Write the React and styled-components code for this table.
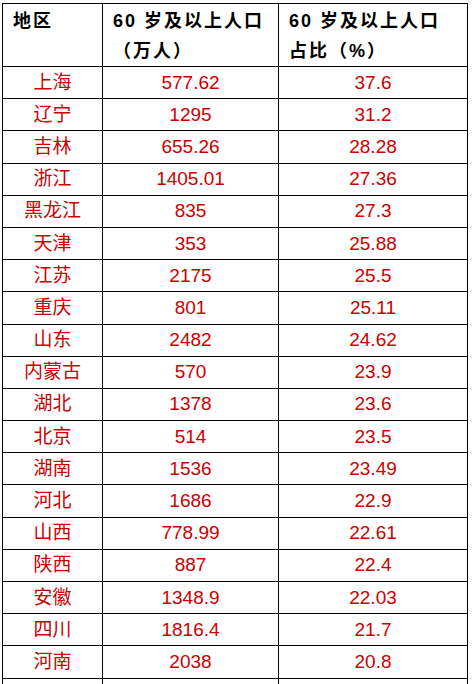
import React from 'react';
import styled, { createGlobalStyle } from 'styled-components';

const GlobalStyle = createGlobalStyle`
  body {
    margin: 0;
    background: #fff;
    font-family: 'Liberation Sans', 'Noto Sans CJK SC', sans-serif;
  }
`;

const Table = styled.table`
  margin: 3px 0 0 2px;
  width: 465px;
  table-layout: fixed;
  border-collapse: collapse;
  font-family: 'Liberation Sans', 'Noto Sans CJK SC', sans-serif;
`;

const HeadCell = styled.th`
  height: 60px;
  padding: 2px 4px 0 10px;
  box-sizing: border-box;
  border: 1px solid #000;
  vertical-align: top;
  text-align: left;
  white-space: nowrap;
  font-size: 18px;
  font-weight: 700;
  line-height: 30px;
  letter-spacing: 2px;
  color: #000;
`;

const Cell = styled.td`
  height: 32.2px;
  padding: 0;
  box-sizing: border-box;
  border: 1px solid #000;
  text-align: center;
  vertical-align: middle;
  white-space: nowrap;
  font-size: 19px;
  line-height: 22px;
  color: #cc0000;
`;

const rows = [
  ['上海', '577.62', '37.6'],
  ['辽宁', '1295', '31.2'],
  ['吉林', '655.26', '28.28'],
  ['浙江', '1405.01', '27.36'],
  ['黑龙江', '835', '27.3'],
  ['天津', '353', '25.88'],
  ['江苏', '2175', '25.5'],
  ['重庆', '801', '25.11'],
  ['山东', '2482', '24.62'],
  ['内蒙古', '570', '23.9'],
  ['湖北', '1378', '23.6'],
  ['北京', '514', '23.5'],
  ['湖南', '1536', '23.49'],
  ['河北', '1686', '22.9'],
  ['山西', '778.99', '22.61'],
  ['陕西', '887', '22.4'],
  ['安徽', '1348.9', '22.03'],
  ['四川', '1816.4', '21.7'],
  ['河南', '2038', '20.8'],
  ['', '', ''],
];

export default function App() {
  return (
    <>
      <GlobalStyle />
      <Table>
        <colgroup>
          <col style={{ width: 100 }} />
          <col style={{ width: 176 }} />
          <col style={{ width: 189 }} />
        </colgroup>
        <thead>
          <tr>
            <HeadCell>地区</HeadCell>
            <HeadCell>
              60 岁及以上人口
              <br />
              （万人）
            </HeadCell>
            <HeadCell>
              60 岁及以上人口
              <br />
              占比（%）
            </HeadCell>
          </tr>
        </thead>
        <tbody>
          {rows.map((r, i) => (
            <tr key={i}>
              <Cell>{r[0]}</Cell>
              <Cell>{r[1]}</Cell>
              <Cell>{r[2]}</Cell>
            </tr>
          ))}
        </tbody>
      </Table>
    </>
  );
}
